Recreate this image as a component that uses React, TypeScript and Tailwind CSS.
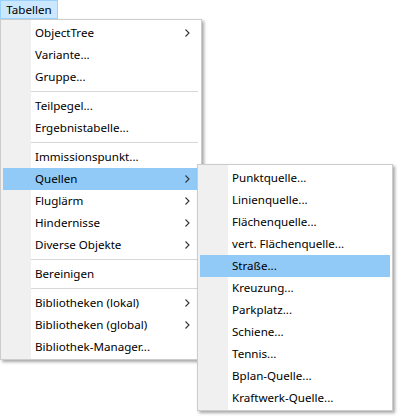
import React from "react";

type Item = { label?: string; sub?: boolean; hi?: boolean; sep?: boolean };

const main: Item[] = [
  { label: "ObjectTree", sub: true },
  { label: "Variante..." },
  { label: "Gruppe..." },
  { sep: true },
  { label: "Teilpegel..." },
  { label: "Ergebnistabelle..." },
  { sep: true },
  { label: "Immissionspunkt..." },
  { label: "Quellen", sub: true, hi: true },
  { label: "Fluglärm", sub: true },
  { label: "Hindernisse", sub: true },
  { label: "Diverse Objekte", sub: true },
  { sep: true },
  { label: "Bereinigen" },
  { sep: true },
  { label: "Bibliotheken (lokal)", sub: true },
  { label: "Bibliotheken (global)", sub: true },
  { label: "Bibliothek-Manager..." },
];

const sub: Item[] = [
  { label: "Punktquelle..." },
  { label: "Linienquelle..." },
  { label: "Flächenquelle..." },
  { label: "vert. Flächenquelle..." },
  { label: "Straße...", hi: true },
  { label: "Kreuzung..." },
  { label: "Parkplatz..." },
  { label: "Schiene..." },
  { label: "Tennis..." },
  { label: "Bplan-Quelle..." },
  { label: "Kraftwerk-Quelle..." },
];

function Chevron() {
  return (
    <svg width="5" height="8" viewBox="0 0 5 8" className="absolute right-[9px] top-[7px]">
      <path d="M0.5 0.5 L4 4 L0.5 7.5" fill="none" stroke="#333" strokeWidth="1.1" />
    </svg>
  );
}

function Menu({ items, width }: { items: Item[]; width: string }) {
  return (
    <div
      className={`${width} border border-[#cccccc] p-[2px] pb-[1px] bg-[linear-gradient(to_right,#f0f0f0_30px,#ffffff_30px)] shadow-[2px_2px_3px_rgba(0,0,0,0.35)]`}
    >
      {items.map((it, i) =>
        it.sep ? (
          <div key={i} className="h-[7px] flex items-center pl-[28px] pr-[1px]">
            <div className="h-px w-full bg-[#d7d7d7]" />
          </div>
        ) : (
          <div
            key={i}
            className={`relative h-[22px] flex items-center pl-[32px] text-[11.6px] text-black leading-none ${
              it.hi ? "bg-[#91c9f7]" : ""
            }`}
          >
            <span className="-mt-[1px]">{it.label}</span>
            {it.sub && <Chevron />}
          </div>
        )
      )}
    </div>
  );
}

export default function App() {
  return (
    <div
      className="relative w-[398px] h-[416px] bg-white overflow-hidden"
      style={{ fontFamily: '"Segoe UI", "Noto Sans", "Open Sans", sans-serif' }}
    >
      <div className="h-[19px] flex">
        <div className="h-[19px] w-[58px] flex items-center justify-center bg-[#cce8ff] border border-[#99d1ff] text-[11.6px] text-black">
          Tabellen
        </div>
      </div>
      <Menu items={main} width="w-[202px]" />
      <div className="absolute left-[197px] top-[164px]">
        <Menu items={sub} width="w-[196px]" />
      </div>
    </div>
  );
}
